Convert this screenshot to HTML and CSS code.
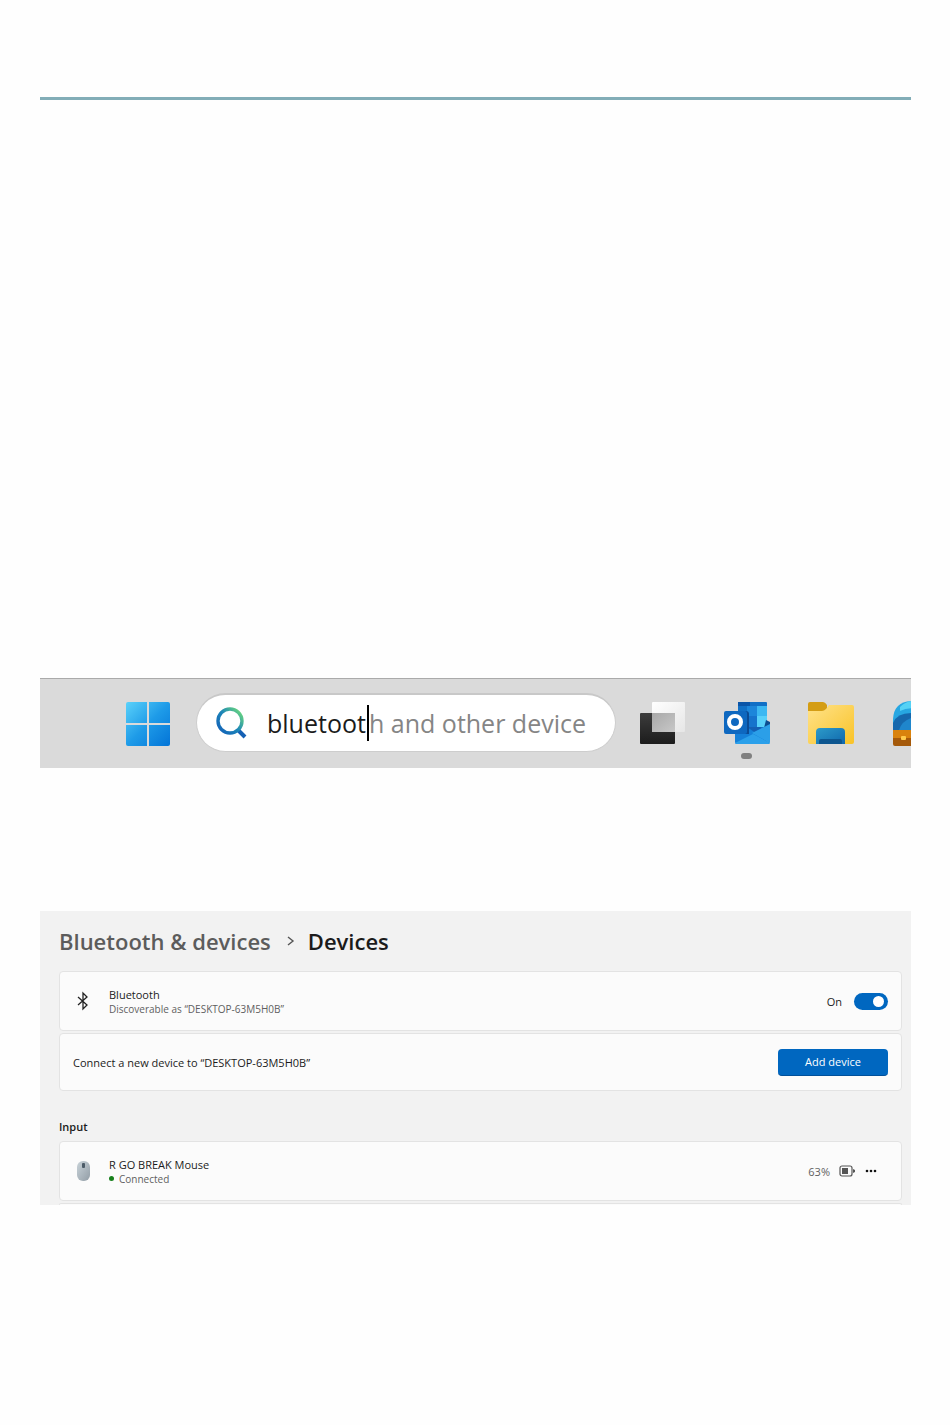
FILE: index.html
```html
<!doctype html>
<html lang="en">
<head>
<title>Bluetooth &amp; devices</title>
<meta charset="UTF-8">
<link rel="stylesheet" href="styles.css">
</head>
<body>
<main class="page">
    <hr class="rule">

    <nav class="taskbar" aria-label="Taskbar">
        <button class="task start" aria-label="Start">
            <svg width="46" height="46" viewBox="0 0 46 46">
                <defs>
                    <linearGradient id="win" x1="0" y1="0" x2="46" y2="46" gradientUnits="userSpaceOnUse">
                        <stop offset="0" stop-color="#5dd4fb"/>
                        <stop offset=".5" stop-color="#1e9be8"/>
                        <stop offset="1" stop-color="#0272d6"/>
                    </linearGradient>
                </defs>
                <g fill="url(#win)">
                    <path d="M3 1H22V22H1V3Q1 1 3 1z"/>
                    <path d="M24 1H43Q45 1 45 3V22H24z"/>
                    <path d="M1 24H22V45H3Q1 45 1 43z"/>
                    <path d="M24 24H45V43Q45 45 43 45H24z"/>
                </g>
            </svg>
        </button>
        <label class="search">
            <svg width="32" height="34" viewBox="0 0 32 34">
                <defs>
                    <linearGradient id="lens" x1="5" y1="24" x2="25" y2="6" gradientUnits="userSpaceOnUse">
                        <stop offset="0" stop-color="#1567b8"/>
                        <stop offset=".5" stop-color="#1c86b8"/>
                        <stop offset="1" stop-color="#62cf83"/>
                    </linearGradient>
                </defs>
                <path d="M23 24l7 7" fill="none" stroke="#1560b4" stroke-width="4"/>
                <circle cx="15" cy="15" r="12" fill="none" stroke="url(#lens)" stroke-width="3.4"/>
            </svg>
            <span class="field">
                <input class="typed" type="text" value="bluetoot" aria-label="Search"><span class="caret"></span><span class="hint">h and other device</span>
            </span>
        </label>
        <button class="task" aria-label="Task view">
            <svg width="48" height="46" viewBox="0 0 48 46">
                <defs>
                    <linearGradient id="dark" x1="0" y1="0" x2="0" y2="1">
                        <stop offset="0" stop-color="#3c3c3c"/>
                        <stop offset="1" stop-color="#1c1c1c"/>
                    </linearGradient>
                    <linearGradient id="light" x1="0" y1="0" x2="1" y2="1">
                        <stop offset="0" stop-color="#fff"/>
                        <stop offset="1" stop-color="#e6e6e6"/>
                    </linearGradient>
                    <linearGradient id="mid" x1="0" y1="0" x2="1" y2="1">
                        <stop offset="0" stop-color="#a8a8a8"/>
                        <stop offset="1" stop-color="#c8c8c8"/>
                    </linearGradient>
                </defs>
                <rect x="1" y="12" width="35" height="31" rx="1" fill="url(#dark)"/>
                <rect x="13" y="1" width="33" height="30" rx="1" fill="url(#light)"/>
                <path d="M13 12H36V31H13z" fill="url(#mid)"/>
            </svg>
        </button>
        <button class="task running" aria-label="Outlook">
            <svg width="48" height="46" viewBox="0 0 48 46">
                <path d="M15 2Q15 1 16 1H43Q44 1 44 2V32H15z" fill="#1170c6"/>
                <path d="M15 1H27V5H15z" fill="#0b55a8"/>
                <path d="M24 5H34V15H24z" fill="#1c86da"/>
                <path d="M34 5H44V15H34z" fill="#3cb8f2"/>
                <path d="M24 15H34V26H24z" fill="#1673cc"/>
                <path d="M34 15H44V26H34z" fill="#58d0fa"/>
                <path d="M24 26H38V33H24z" fill="#145fb4"/>
                <path d="M43 19L47 21V24L41 27z" fill="#0c4d91"/>
                <path d="M12 27L24 26L47 42Q46 43 45 43H14Q12 43 12 41z" fill="#1580d8"/>
                <path d="M47 23V42L29 32z" fill="#2b9fe8"/>
                <path d="M30 33L47 42Q46 43 45 43H14Q12 43 12 42z" fill="#2ba0ea"/>
                <path d="M12 10H23Q26 10 26 13V33H12z" fill="#0b4b94"/>
                <rect x="1" y="10" width="23" height="23" rx="2" fill="#0e68c0"/>
                <circle cx="12" cy="21" r="6" fill="none" stroke="#fff" stroke-width="4"/>
            </svg>
        </button>
        <button class="task" aria-label="File Explorer">
            <svg width="48" height="46" viewBox="0 0 48 46">
                <defs>
                    <linearGradient id="folder" x1="0" y1="0" x2="1" y2="1">
                        <stop offset="0" stop-color="#ffe28a"/>
                        <stop offset="1" stop-color="#f9c327"/>
                    </linearGradient>
                    <linearGradient id="tray" x1="0" y1="0" x2="1" y2="1">
                        <stop offset="0" stop-color="#2d9bc9"/>
                        <stop offset="1" stop-color="#0f67ac"/>
                    </linearGradient>
                </defs>
                <path d="M1 3Q1 1 3 1H16Q18 1 20 4V12H1z" fill="#d49d14"/>
                <path d="M1 10H15Q17 10 19 8L22 4H45Q47 4 47 6V41Q47 43 45 43H3Q1 43 1 41z" fill="url(#folder)"/>
                <path d="M9 43V31Q9 27 13 27H34Q38 27 38 31V43z" fill="url(#tray)"/>
                <path d="M12 43V40Q12 38 14 38H33Q35 38 35 40V43z" fill="#0d568f"/>
            </svg>
        </button>
        <button class="task last" aria-label="Store">
            <svg width="48" height="46" viewBox="0 0 48 46">
                <path d="M2 29V18Q3 1 20 0H28Q47 1 47 20V29z" fill="#27a7e2"/>
                <path d="M9 6Q14 1 20 0H28V8Q18 6 9 10z" fill="#55d2f5"/>
                <path d="M2 29V22Q6 12 20 12V29z" fill="#1668ad"/>
                <path d="M8 29Q11 20 20 17V29z" fill="#1f86cc"/>
                <path d="M2 29H47V37H2z" fill="#d9820d"/>
                <path d="M2 37H47V43Q47 45 45 45H4Q2 45 2 43z" fill="#a5590a"/>
                <rect x="10" y="35" width="5" height="4" rx="1" fill="#ffc94a"/>
            </svg>
        </button>
    </nav>

    <section class="settings">
        <h1 class="crumbs">
            <a href="#">Bluetooth &amp; devices</a>
            <svg width="8" height="10" viewBox="0 0 8 10"><path d="M1 1l5 4-5 4" fill="none" stroke="#555" stroke-width="1.4"/></svg>
            <span>Devices</span>
        </h1>

        <div class="card">
            <svg class="icon" width="20" height="20" viewBox="0 0 20 20"><path d="M5 6l9 8-4 4V2l4 4-9 8" fill="none" stroke="#222" stroke-width="1.3"/></svg>
            <div class="info">
                <label class="name" for="bt">Bluetooth</label>
                <p class="sub">Discoverable as “DESKTOP-63M5H0B”</p>
            </div>
            <span class="state">On</span>
            <input class="toggle" id="bt" type="checkbox" role="switch" checked>
        </div>
        <div class="card connect">
            <p class="name">Connect a new device to “DESKTOP-63M5H0B”</p>
            <button class="add">Add device</button>
        </div>

        <h2 class="group">Input</h2>
        <div class="card">
            <svg class="icon" width="20" height="22" viewBox="0 0 20 22">
                <defs>
                    <linearGradient id="mouse" x1="0" y1="0" x2="1" y2="1">
                        <stop offset="0" stop-color="#c9d3d9"/>
                        <stop offset="1" stop-color="#929da6"/>
                    </linearGradient>
                </defs>
                <rect x="4" y="1" width="13" height="20" rx="6" fill="url(#mouse)"/>
                <rect x="9" y="3" width="3" height="5" rx="1" fill="#4c5b68"/>
            </svg>
            <div class="info">
                <p class="name">R GO BREAK Mouse</p>
                <p class="sub connected">Connected</p>
            </div>
            <span class="level">63%</span>
            <svg class="battery" width="16" height="12" viewBox="0 0 16 12">
                <rect x="1" y="1" width="12" height="10" rx="2" fill="none" stroke="#555" stroke-width="1.2"/>
                <path d="M3 3H9V9H3z" fill="#555"/>
                <path d="M14 4l2 1v2l-2 1z" fill="#555"/>
            </svg>
            <button class="more" aria-label="More options">
                <svg width="12" height="4" viewBox="0 0 12 4"><g fill="#111"><circle cx="2" cy="2" r="1.3"/><circle cx="6" cy="2" r="1.3"/><circle cx="10" cy="2" r="1.3"/></g></svg>
            </button>
        </div>
        <div class="card next"></div>
    </section>
</main>
</body>
</html>
```
FILE: styles.css
```css
html,body,h1,h2,p{margin:0;padding:0;}
*{box-sizing:border-box;}
body{background:#fefefe;color:#1b1b1b;font-family:"Open Sans","Noto Sans",sans-serif;}
button{border:0;padding:0;background:none;font-family:inherit;cursor:pointer;}
svg{display:block;flex:none;}
.page{padding:97px 39px 40px 40px;}
.rule{height:3px;margin:0;border:0;background:#82adb7;}

.taskbar{display:flex;align-items:center;height:90px;margin-top:578px;padding-left:85px;overflow:hidden;background:#dadada;border-top:1px solid #aaa;}
.task{position:relative;flex:none;margin-right:36px;}
.task.start{margin-right:25px;}
.task.last{margin-right:0;}
.task.running:after{content:"";position:absolute;left:18px;bottom:-12px;width:11px;height:6px;border-radius:3px;background:#808080;}
.search{display:flex;align-items:center;flex:0 0 420px;min-width:0;height:59px;margin:0 23px 2px 0;padding:0 28px 0 18px;border:1px solid #cdcdcd;border-top:2px solid #c8c8c8;border-radius:30px;background:#fff;cursor:text;}
.field{display:flex;align-items:center;flex:1;min-width:0;margin-left:20px;overflow:hidden;font-size:25px;line-height:36px;white-space:nowrap;}
.typed{flex:none;width:100px;height:36px;border:0;padding:0;outline:0;background:none;color:#1b1b1b;font:inherit;}
.caret{flex:none;width:2px;height:36px;background:#000;}
.hint{color:#858585;}

.settings{margin-top:143px;padding:0 9px 0 19px;background:#f2f2f2;}
.crumbs{display:flex;align-items:center;height:60px;font-size:22px;line-height:32px;font-weight:600;}
.crumbs a{color:#5c5c5c;text-decoration:none;}
.crumbs svg{margin:0 13px 0 16px;}
.card{display:flex;align-items:center;height:60px;padding:0 13px;border:1px solid #e3e3e3;border-radius:4px;background:#fbfbfb;}
.icon{margin-right:16px;}
.info{flex:1;padding-top:2px;}
.name{display:block;font-size:11px;line-height:15px;}
.sub{font-size:10px;line-height:15px;color:#5f5f5f;}
.connected:before{content:"";display:inline-block;width:5px;height:5px;margin-right:5px;border-radius:50%;background:#17801c;vertical-align:2px;}
.state{margin-right:12px;font-size:11px;}
.toggle{appearance:none;display:flex;width:34px;height:17px;margin:0;padding:3px 4px;border-radius:9px;background:#0067c0;cursor:pointer;}
.toggle:before{content:"";width:11px;height:11px;border-radius:50%;background:#fff;}
.toggle:checked{justify-content:flex-end;}
.connect{justify-content:space-between;height:58px;margin-top:2px;}
.add{width:110px;height:27px;border-radius:4px;border-bottom:1px solid #00509a;background:#0067c0;color:#fff;font-size:11px;}
.group{margin-top:28px;padding-bottom:6px;font-size:11px;line-height:16px;font-weight:600;}
.level{font-size:11px;color:#5f5f5f;}
.battery{margin:0 10px 0 9px;}
.more{margin-right:11px;padding:6px 0;}
.next{height:2px;margin-top:2px;border-bottom:0;border-radius:4px 4px 0 0;}
```
